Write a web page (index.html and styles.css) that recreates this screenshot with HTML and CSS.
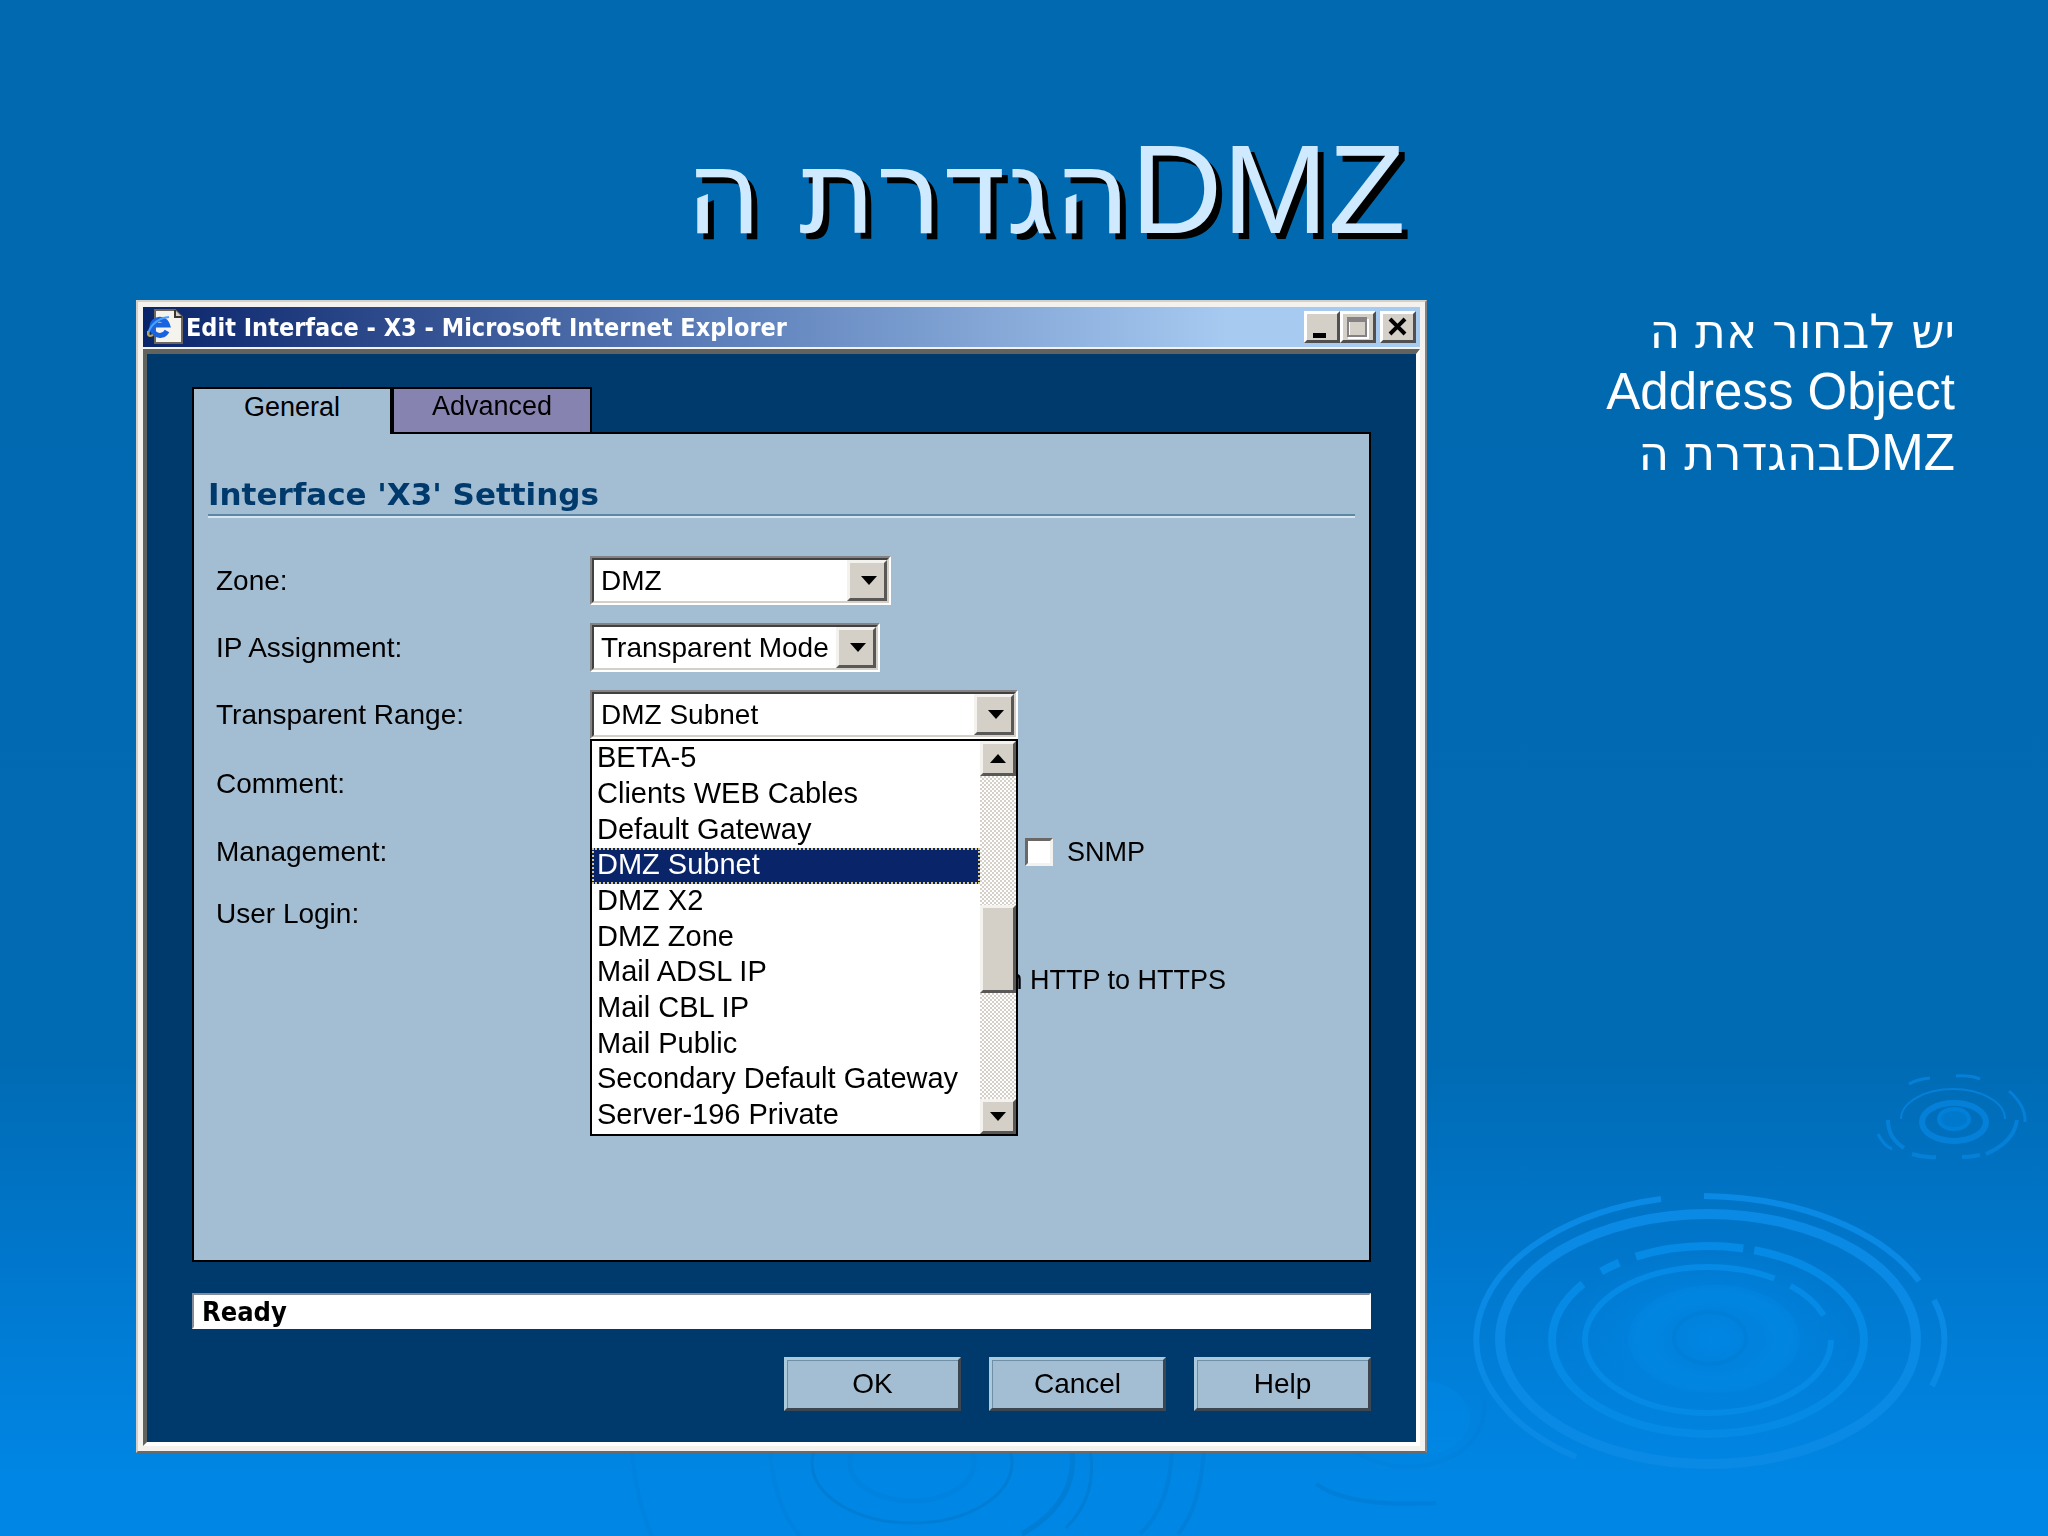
FILE: index.html
```html
<!DOCTYPE html>
<html lang="he">
<head>
  <meta charset="utf-8">
  <title>הגדרת הDMZ</title>
  <meta name="viewport" content="width=device-width, initial-scale=1.0" />
  <link rel="stylesheet" href="styles.css">
</head>
<body>
  <!-- water ripples in the background -->
  <svg class="ripples" viewBox="0 0 2048 1536" preserveAspectRatio="xMaxYMax slice" aria-hidden="true">
    <defs>
      <radialGradient id="pool">
        <stop offset="0" stop-color="#0086e4" />
        <stop offset="0.5" stop-color="#0082dd" />
        <stop offset="0.8" stop-color="#0086e2" />
        <stop offset="1" stop-color="#0086e2" stop-opacity="0.5" />
      </radialGradient>
      <radialGradient id="glow">
        <stop offset="0.5" stop-color="#0082dd" stop-opacity="0.8" />
        <stop offset="1" stop-color="#0082dd" stop-opacity="0" />
      </radialGradient>
    </defs>
    <g fill="none" stroke="#0a8ae4">
      <ellipse cx="1708" cy="1339" rx="150" ry="92" fill="url(#glow)" stroke="none" />
      <path d="M1661 1199A236 144 0 0 0 1576 1457" stroke-width="6" />
      <path d="M1704 1196A239 141 0 0 1 1919 1281" stroke-width="6" />
      <path d="M1934 1300Q1956 1340 1932 1386" stroke-width="6" />
      <ellipse cx="1708" cy="1339" rx="208" ry="125" stroke-width="10" />
      <ellipse cx="1708" cy="1340" rx="156" ry="94" stroke-width="8" stroke="#058ae6" pathLength="360" stroke-dasharray="210 10 9 8 49 5 69" />
      <ellipse cx="1708" cy="1340" rx="123" ry="73" stroke-width="6" stroke="#058ae6" pathLength="360" stroke-dasharray="309 10 26 15" />
      <ellipse cx="1714" cy="1339" rx="86" ry="54" fill="url(#pool)" stroke="none" />
      <ellipse cx="1710" cy="1338" rx="36" ry="26" stroke="#007fd8" stroke-width="4" />
    </g>
    <g fill="none" stroke="#0580d8">
      <path d="M1909 1084Q1918 1079 1930 1078M1956 1076Q1970 1075 1980 1079M2009 1091Q2026 1106 2025 1122M1878 1134Q1884 1146 1892 1149" stroke-width="3" />
      <path d="M1888 1120Q1888 1138 1904 1148M1912 1154Q1924 1158 1936 1157M1962 1157Q1972 1157 1980 1155M1986 1154Q2014 1142 2017 1120" stroke-width="4" />
      <ellipse cx="1953" cy="1119" rx="52" ry="30" stroke-width="2" pathLength="360" stroke-dasharray="0 180 180" />
      <ellipse cx="1954" cy="1122" rx="32" ry="19" stroke-width="6" />
      <ellipse cx="1954" cy="1119" rx="15" ry="10" stroke="#0080d8" stroke-width="4" fill="#0078cc" />
    </g>
    <g fill="none" stroke="#0078cc" opacity="0.6">
      <ellipse cx="912" cy="1463" rx="100" ry="60" stroke-width="3" />
      <ellipse cx="912" cy="1463" rx="62" ry="38" stroke-width="5" opacity="0.3" />
      <path d="M1072 1450Q1078 1502 1022 1534" stroke-width="5" />
      <path d="M1090 1450Q1098 1496 1066 1528" stroke-width="3" />
      <path d="M1172 1450Q1170 1506 1140 1534M1204 1450Q1200 1508 1178 1534" stroke-width="4" opacity="0.6" />
      <path d="M1316 1484Q1350 1508 1436 1503" stroke-width="4" opacity="0.7" />
      <path d="M632 1450Q636 1500 652 1536M770 1450Q774 1506 800 1536" stroke-width="4" opacity="0.3" />
      <path d="M1354 1452Q1410 1482 1460 1452Q1488 1430 1484 1400" stroke-width="4" opacity="0.3" />
    </g>
    <ellipse cx="1420" cy="1418" rx="50" ry="38" fill="#0088e6" opacity="0.5" />
  </svg>

  <div class="slide">
    <h1 class="slide-title"><span class="he">הגדרת ה</span>DMZ</h1>

    <div class="slide-body">
      <div class="window">
        <div class="titlebar">
          <svg class="ie-icon" viewBox="0 0 36 36" aria-hidden="true">
            <path d="M8 1h20l7 7v26H8z" fill="#f4f3ee" stroke="#6b675c" stroke-width="2" />
            <path d="M28 1v7h7" fill="#d4d0c8" stroke="#38362f" stroke-width="2" />
            <path d="M20 22a8 8 0 1 1 .5-6H7" fill="none" stroke="#1763e0" stroke-width="5" />
            <path d="M2 27C0 20 9 9 22 8" fill="none" stroke="#4aa0ff" stroke-width="2" />
            <path d="M1 22Q0 29 6 26" fill="none" stroke="#b7a64c" stroke-width="2" />
          </svg>
          <span class="titlebar-text">Edit Interface - X3 - Microsoft Internet Explorer</span>
          <div class="titlebar-buttons">
            <button type="button" class="win-btn" aria-label="Minimize">
              <svg viewBox="0 0 30 26"><path d="M6 19h13v5H6z" /></svg>
            </button>
            <button type="button" class="win-btn" aria-label="Maximize" disabled>
              <svg viewBox="0 0 30 26"><path d="M6 6h19v18H6z" fill="none" stroke="#fff" stroke-width="2" /><path d="M5 4h18v18H5z" fill="none" stroke="#848284" stroke-width="2" /><path d="M4 4h20v4H4z" fill="#848284" /></svg>
            </button>
            <button type="button" class="win-btn win-close" aria-label="Close">
              <svg viewBox="0 0 30 26"><path d="M7 5l15 15M22 5L7 20" stroke="#000" stroke-width="4" /></svg>
            </button>
          </div>
        </div>

        <form class="content" id="interfaceForm">
          <div class="tabs">
            <button type="button" class="tab active">General</button>
            <button type="button" class="tab">Advanced</button>
          </div>

          <div class="panel">
            <h2 class="panel-title">Interface 'X3' Settings</h2>

            <div class="fields">
              <label for="zone">Zone:</label>
              <div class="field">
                <span class="combo combo-zone">
                  <select id="zone"><option>DMZ</option></select>
                </span>
              </div>

              <label for="ip_assignment">IP Assignment:</label>
              <div class="field">
                <span class="combo combo-ip">
                  <select id="ip_assignment"><option>Transparent Mode</option></select>
                </span>
              </div>

              <label for="range">Transparent Range:</label>
              <div class="field">
                <span class="combo combo-range">
                  <select id="range"><option>DMZ Subnet</option></select>
                </span>
                <div class="dropdown">
                  <select class="dropdown-list" size="11" aria-label="Transparent Range">
                    <option>BETA-5</option>
                    <option>Clients WEB Cables</option>
                    <option>Default Gateway</option>
                    <option selected>DMZ Subnet</option>
                    <option>DMZ X2</option>
                    <option>DMZ Zone</option>
                    <option>Mail ADSL IP</option>
                    <option>Mail CBL IP</option>
                    <option>Mail Public</option>
                    <option>Secondary Default Gateway</option>
                    <option>Server-196 Private</option>
                  </select>
                  <div class="scrollbar">
                    <button type="button" class="scroll-btn" aria-label="Scroll up">
                      <svg viewBox="0 0 16 10"><path d="M8 0l8 9H0z" /></svg>
                    </button>
                    <div class="track"></div>
                    <div class="thumb"></div>
                    <div class="track track-after"></div>
                    <button type="button" class="scroll-btn" aria-label="Scroll down">
                      <svg viewBox="0 0 16 10"><path d="M0 0h16l-8 9z" /></svg>
                    </button>
                  </div>
                </div>
              </div>

              <span>Comment:</span>
              <div class="field"></div>

              <span>Management:</span>
              <div class="field">
                <label class="check" for="snmp"><input type="checkbox" id="snmp" />SNMP</label>
              </div>

              <span>User Login:</span>
              <div class="field"></div>

              <span></span>
              <div class="field"><span class="redirect">m HTTP to HTTPS</span></div>
            </div>
          </div>

          <input type="text" class="status" value="Ready" aria-label="Status" readonly />

          <div class="actions">
            <button type="submit" class="action">OK</button>
            <button type="button" class="action">Cancel</button>
            <button type="button" class="action">Help</button>
          </div>
        </form>
      </div>

      <p class="note">
        <span class="he">יש לבחור את ה</span><br>
        Address Object<br>
        <span class="he">בהגדרת ה</span>DMZ
      </p>
    </div>
  </div>
</body>
</html>
```

FILE: styles.css
```css
* {
  box-sizing: border-box;
}
body {
  margin: 0;
  min-height: 100vh;
  font-family: "Liberation Sans", Arial, sans-serif;
  font-size: 27px;
  color: #000;
  background: linear-gradient(#0069b0 0%, #006ab2 68%, #0079d0 84%, #0086e4 96%, #0086e4 100%);
}
.ripples {
  position: absolute;
  top: 0;
  left: 0;
  width: 100%;
  height: 100%;
}
.slide {
  position: relative;
  padding: 117px 93px 80px 136px;
}
.slide-title {
  margin: 0 0 39px;
  font-size: 127px;
  font-weight: normal;
  line-height: 144px;
  text-align: center;
  color: #cfeaff;
  text-shadow: 6px 6px 0 #000;
}
.he {
  font-family: "DejaVu Sans", "Liberation Sans", sans-serif;
  line-height: 1;
}
.slide-title .he {
  font-size: 117px;
}
.slide-body {
  display: grid;
  grid-template-columns: 1fr 480px;
  gap: 48px;
  align-items: start;
}
.note {
  margin: 0;
  font-size: 51px;
  line-height: 61px;
  text-align: right;
  color: #fff;
}
.note .he {
  font-size: 47px;
}

/* window frame */
.window {
  padding: 5px;
  border: 2px solid;
  border-color: #d4d0c8 #848284 #6c6a68 #d4d0c8;
  background: #f4f2ee;
}
.titlebar {
  display: flex;
  align-items: center;
  height: 40px;
  margin-bottom: 2px;
  padding: 0 4px;
  background: linear-gradient(90deg, #0a246a, #5d7fba 45%, #a6caf0 85%);
}
.ie-icon {
  width: 36px;
  height: 36px;
  margin-right: 3px;
}
.titlebar-text {
  flex: 1;
  font-family: "DejaVu Sans Condensed", "DejaVu Sans", sans-serif;
  font-size: 25px;
  font-weight: bold;
  color: #fff;
}
.titlebar-buttons {
  display: flex;
}
.win-btn {
  width: 36px;
  height: 32px;
  padding: 0;
  border: 3px solid;
  border-color: #fff #505050 #505050 #fff;
  background: #d4d0c8;
}
.win-btn svg {
  display: block;
  width: 30px;
  height: 26px;
}
.win-close {
  margin-left: 4px;
}
.content {
  padding: 33px 45px 31px 45px;
  border: 4px solid;
  border-width: 5px 4px 4px 4px;
  border-color: #62625f #fff #fff #62625f;
  background: #003a6c;
}

/* tabs */
.tabs {
  display: flex;
}
.tab {
  width: 200px;
  height: 47px;
  padding: 0 0 8px;
  border: 2px solid #000;
  background: #8683b0;
  font: 27px "Liberation Sans", Arial, sans-serif;
  color: #000;
}
.tab.active {
  position: relative;
  z-index: 1;
  border-bottom: none;
  background: #a3bdd3;
}
.panel {
  min-height: 830px;
  margin-top: -2px;
  padding: 40px 14px 20px;
  border: 2px solid #000;
  background: #a3bdd3;
}
.panel-title {
  margin: 0 0 31px;
  border-bottom: 2px solid #5b89a4;
  box-shadow: 0 2px 0 #d5e6f0;
  font-family: "DejaVu Sans", sans-serif;
  font-size: 31px;
  line-height: 40px;
  color: #003a6c;
}

/* form rows */
.fields {
  display: grid;
  grid-template-columns: 374px 1fr;
  grid-template-rows: 67px 67px 67px 72px 64px 60px 72px;
  align-items: center;
  margin-left: 8px;
  font-size: 28px;
}
.field {
  position: relative;
  font-size: 27px;
}
.combo {
  display: block;
  position: relative;
  border: 2px solid;
  border-color: #848284 #fff #fff #848284;
}
.combo select {
  display: block;
  appearance: none;
  width: 100%;
  height: 45px;
  padding: 0 7px;
  border: 2px solid;
  border-color: #424142 #d4d0c8 #d4d0c8 #424142;
  border-radius: 0;
  background: #fff;
  font: 28px "Liberation Sans", Arial, sans-serif;
  color: #000;
}
.combo::before {
  content: "";
  position: absolute;
  z-index: 1;
  top: 2px;
  right: 2px;
  bottom: 2px;
  width: 34px;
  border: 3px solid;
  border-color: #f4f2ee #5a5856 #5a5856 #f4f2ee;
  background: #d4d0c8;
}
.combo::after {
  content: "";
  position: absolute;
  z-index: 2;
  top: 18px;
  right: 12px;
  border: 8px solid transparent;
  border-top: 9px solid #000;
  border-bottom: none;
}
.combo-zone {
  width: 301px;
}
.combo-ip {
  width: 290px;
}
.combo-range {
  width: 428px;
}
.dropdown {
  position: absolute;
  z-index: 3;
  top: 100%;
  left: 0;
  display: flex;
  width: 428px;
  border: 2px solid #000;
  background: #fff;
}
.dropdown-list {
  flex: 1;
  height: 393px;
  padding: 0;
  border: none;
  border-radius: 0;
  outline: none;
  overflow: hidden;
  background: #fff;
  font: 29px "Liberation Sans", Arial, sans-serif;
  color: #000;
}
.dropdown-list option {
  height: 36px;
  padding: 0 5px;
  line-height: 39px;
  color: #000;
}
.dropdown-list option:nth-child(3n) {
  height: 35px;
}
.dropdown-list option:checked {
  background: #0a246a linear-gradient(#0a246a, #0a246a);
  outline: 2px dotted #d8c98f;
  outline-offset: -2px;
  color: #fff;
}
.scrollbar {
  display: flex;
  flex-direction: column;
  width: 36px;
}
.scroll-btn,
.thumb {
  height: 35px;
  padding: 0;
  border: 3px solid;
  border-color: #f4f2ee #5a5856 #5a5856 #f4f2ee;
  background: #d4d0c8;
}
.scroll-btn svg {
  display: block;
  width: 16px;
  height: 10px;
  margin: 0 auto;
}
.thumb {
  height: 88px;
}
.track {
  flex: 128;
  background: repeating-conic-gradient(#fff 0 25%, #d4d0c8 0 50%) 0 0 / 4px 4px;
}
.track-after {
  flex: 106;
}
.check {
  display: flex;
  align-items: center;
  gap: 14px;
  margin-left: 435px;
}
.check input {
  appearance: none;
  width: 28px;
  height: 28px;
  margin: 0;
  border: 3px solid;
  border-color: #6a6866 #f4f2ee #f4f2ee #6a6866;
  background: #fff;
}
.redirect {
  margin-left: 410px;
}

/* status line and buttons */
.status {
  display: block;
  width: 100%;
  height: 36px;
  margin: 31px 0 28px;
  padding: 0 8px;
  border: 2px solid;
  border-color: #848c9c #fff #fff #848c9c;
  background: #fff;
  font: bold 27px "DejaVu Sans Condensed", "DejaVu Sans", sans-serif;
  color: #000;
}
.actions {
  display: flex;
  justify-content: flex-end;
  gap: 28px;
}
.action {
  width: 177px;
  height: 54px;
  padding: 0;
  border: 3px solid;
  border-color: #a9cbdc #3c4650 #3c4650 #a9cbdc;
  background: #a3bdd3;
  box-shadow: inset 1px 1px 0 #6f8ea8;
  font: 28px "Liberation Sans", Arial, sans-serif;
  color: #000;
}
```
